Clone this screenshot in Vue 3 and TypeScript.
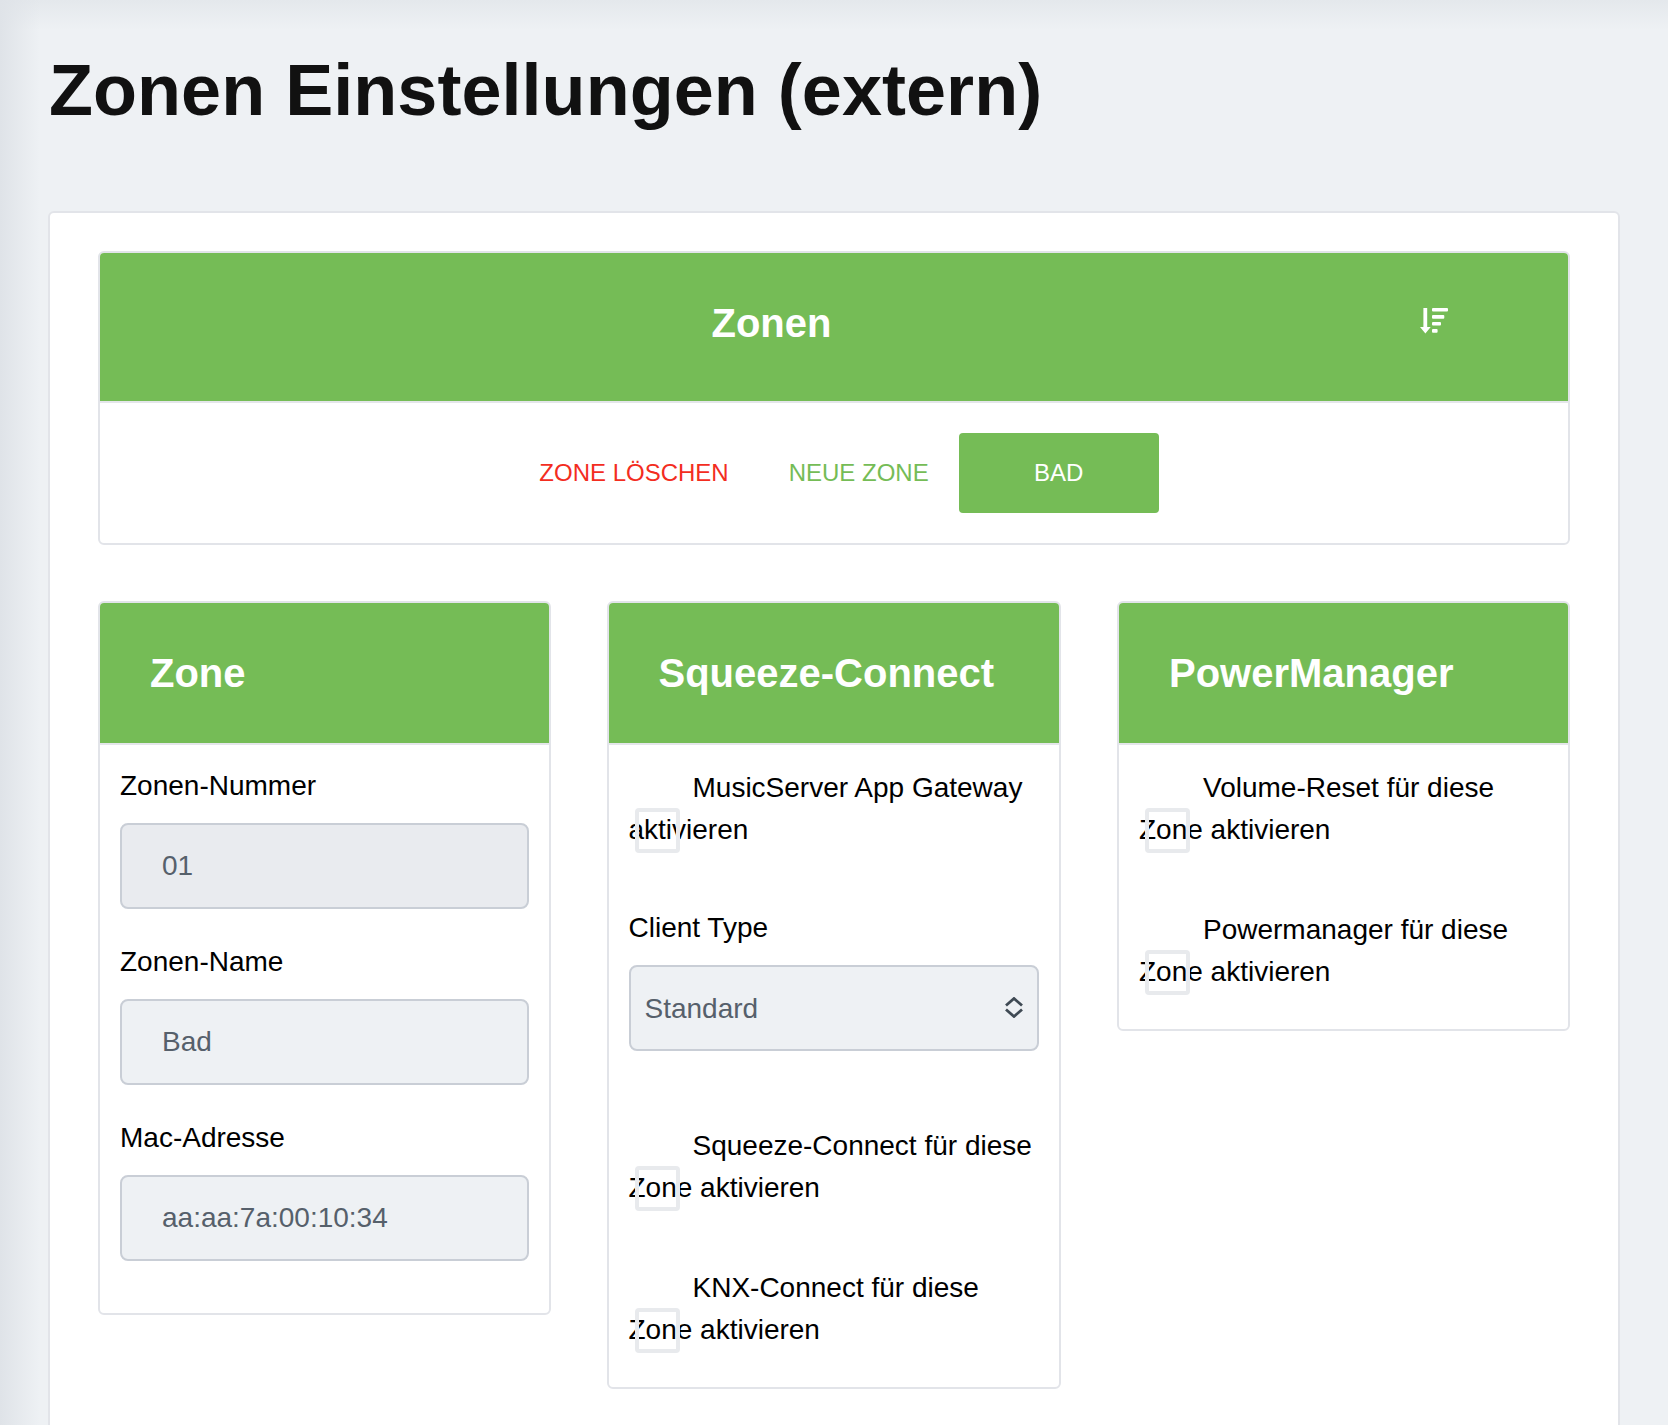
<script setup lang="ts">
const zoneFields = [
  { label: 'Zonen-Nummer', value: '01', disabled: true },
  { label: 'Zonen-Name', value: 'Bad', disabled: false },
  { label: 'Mac-Adresse', value: 'aa:aa:7a:00:10:34', disabled: false },
]
const powerChecks = ['Volume-Reset für diese Zone aktivieren', 'Powermanager für diese Zone aktivieren']
const connectChecks = ['Squeeze-Connect für diese Zone aktivieren', 'KNX-Connect für diese Zone aktivieren']
</script>

<template>
  <div class="page">
    <h1 class="title">Zonen Einstellungen (extern)</h1>
    <section class="card">
      <div class="panel">
        <header class="bar zones-bar">
          <span class="bar-title zones-title">Zonen</span>
          <svg class="sort" width="28" height="26" viewBox="0 0 28 26" fill="#fff" aria-hidden="true">
            <path d="M3.4 0h3.8v19h3.5l-5.3 6.6L0 19h3.4z" />
            <rect x="12" y="0" width="16" height="3.6" rx="1" />
            <rect x="12" y="7" width="12.3" height="3.8" rx="1" />
            <rect x="12" y="14" width="9" height="3.6" rx="1" />
            <rect x="12" y="21" width="5.6" height="3.8" rx="1" />
          </svg>
        </header>
        <div class="actions">
          <button class="act danger">ZONE LÖSCHEN</button>
          <button class="act success">NEUE ZONE</button>
          <button class="act primary">BAD</button>
        </div>
      </div>

      <div class="columns">
        <div class="panel col zone-col">
          <header class="bar col-bar"><span class="bar-title">Zone</span></header>
          <div class="body">
            <div v-for="f in zoneFields" :key="f.label" class="field">
              <label class="lab">{{ f.label }}</label>
              <input class="ctl" :class="{ off: f.disabled }" :value="f.value" :disabled="f.disabled" />
            </div>
          </div>
        </div>

        <div class="panel col connect-col">
          <header class="bar col-bar"><span class="bar-title">Squeeze-Connect</span></header>
          <div class="body">
            <label class="check"><input type="checkbox" class="box" />MusicServer App Gateway aktivieren</label>
            <div class="field type-field">
              <label class="lab">Client Type</label>
              <div class="select-wrap">
                <select class="ctl sel"><option>Standard</option></select>
                <svg class="chev" width="18" height="21" viewBox="0 0 18 21" fill="none" stroke="#3f4a54" stroke-width="2.8" aria-hidden="true">
                  <path d="M1 8.5l8-7 8 7M1 12.5l8 7 8-7" />
                </svg>
              </div>
            </div>
            <label v-for="c in connectChecks" :key="c" class="check"><input type="checkbox" class="box" />{{ c }}</label>
          </div>
        </div>

        <div class="panel col power-col">
          <header class="bar col-bar"><span class="bar-title">PowerManager</span></header>
          <div class="body">
            <label v-for="c in powerChecks" :key="c" class="check"><input type="checkbox" class="box" />{{ c }}</label>
          </div>
        </div>
      </div>
    </section>
  </div>
</template>

<style>
html, body { margin: 0; overflow: hidden; }
</style>

<style scoped>
.page {
  height: 1425px;
  overflow: hidden;
  box-sizing: border-box;
  padding: 0 48px 0 48px;
  font-family: "Liberation Sans", Arial, sans-serif;
  color: #000;
  background:
    linear-gradient(to right, #dfe3e8, rgba(238, 241, 244, 0) 40px),
    linear-gradient(to bottom, #e4e8ec, rgba(238, 241, 244, 0) 30px),
    #eef1f4;
}
.title {
  margin: 0;
  padding: 50px 0 0 1px;
  height: 211px;
  box-sizing: border-box;
  font-size: 72px;
  line-height: 80px;
  font-weight: 700;
  letter-spacing: 0.04px;
  color: #111;
}
.card {
  background: #fff;
  border: 2px solid #e2e4e9;
  border-radius: 6px;
  padding: 38px 48px 200px 48px;
}
.panel {
  background: #fff;
  border: 2px solid #e2e4e9;
  border-radius: 6px;
  box-sizing: border-box;
}
.bar {
  background: #75bc56;
  color: #fff;
  border-bottom: 2px solid #e4e6ea;
  border-radius: 4px 4px 0 0;
  display: flex;
  align-items: center;
  box-sizing: content-box;
}
.bar-title {
  font-size: 40px;
  font-weight: 700;
  line-height: 48px;
}
.zones-bar {
  height: 148px;
  justify-content: space-between;
  padding: 0 120px 0 611.5px;
}
.zones-title { margin-top: -8px; }
.sort { margin-top: -12px; }
.actions {
  display: flex;
  justify-content: center;
  padding: 30px;
}
.act {
  height: 80px;
  border: 0;
  border-radius: 4px;
  padding: 0 30px;
  background: transparent;
  font-family: inherit;
  font-size: 24px;
  line-height: 36px;
}
.danger { color: #f32d1f; }
.success { color: #75bc56; }
.primary { width: 200px; background: #75bc56; color: #fff; }
.columns {
  display: grid;
  grid-template-columns: repeat(3, 453px);
  justify-content: space-between;
  align-items: start;
  margin-top: 56px;
}
.col-bar {
  height: 140px;
  padding: 0 50px;
}
.body {
  padding: 20px;
  font-size: 28px;
  line-height: 42px;
}
.lab { display: block; }
.field + .field { margin-top: 32px; }
.ctl {
  display: block;
  width: 100%;
  height: 86px;
  margin-top: 16px;
  box-sizing: border-box;
  border: 2px solid #c9ced6;
  border-radius: 8px;
  background: #eef1f4;
  color: #56606b;
  font-family: inherit;
  font-size: 28px;
  padding: 0 40px;
  outline: none;
}
.ctl.off { background: #e9ebef; }
.zone-col .body { padding-bottom: 52px; }
.connect-col { width: 454px; margin-left: -1px; }
.select-wrap { position: relative; }
.sel {
  appearance: none;
  padding: 0 14px;
}
.chev {
  position: absolute;
  right: 16px;
  top: 32px;
}
.check {
  display: block;
  position: relative;
  text-indent: 64px;
  padding-top: 2px;
}
.check + .check { margin-top: 56px; }
.type-field { margin-top: 56px; }
.type-field + .check { margin-top: 72px; }
.box {
  appearance: none;
  position: absolute;
  left: 6px;
  top: 43px;
  width: 45px;
  height: 45px;
  margin: 0;
  box-sizing: border-box;
  border: 4px solid #e8eaed;
  border-radius: 4px;
  background: transparent;
}
.connect-col .body { padding-bottom: 36px; }
.power-col .body { padding-bottom: 36px; }
</style>
